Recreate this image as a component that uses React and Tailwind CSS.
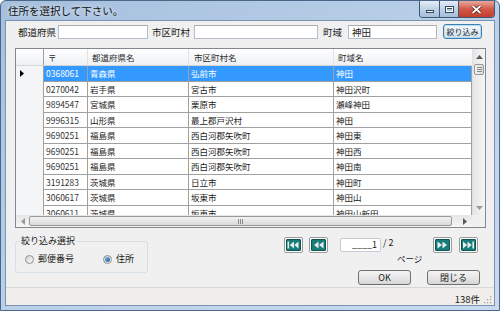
import React from "react";

const rows = [
  ["0368061", "青森県", "弘前市", "神田"],
  ["0270042", "岩手県", "宮古市", "神田沢町"],
  ["9894547", "宮城県", "栗原市", "瀬峰神田"],
  ["9996315", "山形県", "最上郡戸沢村", "神田"],
  ["9690251", "福島県", "西白河郡矢吹町", "神田東"],
  ["9690251", "福島県", "西白河郡矢吹町", "神田西"],
  ["9690251", "福島県", "西白河郡矢吹町", "神田南"],
  ["3191283", "茨城県", "日立市", "神田町"],
  ["3060617", "茨城県", "坂東市", "神田山"],
  ["3060611", "茨城県", "坂東市", "神田山新田"],
];

// small scroll arrow
const Arrow = ({ dir, color = "#5a5a5a" }) => {
  const pts = {
    up: "0,4 3.5,0 7,4",
    down: "0,0 3.5,4 7,0",
    left: "4,0 0,3.5 4,7",
    right: "0,0 4,3.5 0,7",
  }[dir];
  const vertical = dir === "up" || dir === "down";
  return (
    <svg width={vertical ? 7 : 4} height={vertical ? 4 : 7}>
      <polygon points={pts} fill={color} />
    </svg>
  );
};

const NavBtn = ({ kind }) => (
  <div className="w-[19px] h-[16px] rounded-[2px] border border-[#9a9a9a] bg-white p-[1px]">
    <div className="w-full h-full rounded-[1px] border border-[#0c5553] bg-[#187c79] flex items-center justify-center">
      <svg width="13" height="8" viewBox="0 0 13 8">
        {kind === "first" && (
          <>
            <rect x="0.5" y="0.5" width="1.6" height="7" fill="#e6eeee" />
            <polygon points="7,0.5 2.8,4 7,7.5" fill="#e6eeee" />
            <polygon points="11.5,0.5 7.3,4 11.5,7.5" fill="#e6eeee" />
          </>
        )}
        {kind === "prev" && (
          <>
            <polygon points="6.5,0.5 2,4 6.5,7.5" fill="#e6eeee" />
            <polygon points="11.5,0.5 7,4 11.5,7.5" fill="#e6eeee" />
          </>
        )}
        {kind === "next" && (
          <>
            <polygon points="1.5,0.5 6,4 1.5,7.5" fill="#e6eeee" />
            <polygon points="6.5,0.5 11,4 6.5,7.5" fill="#e6eeee" />
          </>
        )}
        {kind === "last" && (
          <>
            <polygon points="1,0.5 5.2,4 1,7.5" fill="#e6eeee" />
            <polygon points="5.5,0.5 9.7,4 5.5,7.5" fill="#e6eeee" />
            <rect x="10.4" y="0.5" width="1.6" height="7" fill="#e6eeee" />
          </>
        )}
      </svg>
    </div>
  </div>
);

const Radio = ({ checked }) => (
  <div className="w-[9px] h-[9px] rounded-full border border-[#8e8f8f] bg-linear-to-br from-[#d4d4d4] to-[#fbfbfb] flex items-center justify-center">
    {checked && (
      <div className="w-[5px] h-[5px] rounded-full bg-linear-to-br from-[#7fb8ea] to-[#1a5aa0]" />
    )}
  </div>
);

const WinButton = ({ children, className = "" }) => (
  <button
    className={
      "h-[15px] rounded-[3px] border border-[#707070] bg-linear-to-b from-[#f4f4f4] via-[#e7e7e7] to-[#d6d6d6] text-[9px] leading-[13px] text-[#1a1a1a] " +
      className
    }
  >
    {children}
  </button>
);

export default function App() {
  return (
    <div className="w-[500px] h-[311px] overflow-hidden bg-white">
      <div className="w-[500px] h-[311px] flex flex-col rounded-t-[6px] border border-[#4a6789] bg-linear-to-br from-[#a5bfdd] via-[#bad0e9] to-[#c8daee] font-['Noto_Sans_CJK_JP',sans-serif] text-[#1a1a1a]">
        {/* title bar */}
        <div className="h-[19px] flex items-start">
          <div className="ml-[7px] text-[10.5px] leading-[19px] text-[#111] [text-shadow:0_0_5px_#ffffff]">
            住所を選択して下さい。
          </div>
          <div className="ml-auto mr-[4px] flex h-[17px] rounded-b-[4px] border border-t-0 border-[#3e5876] overflow-hidden">
            <div className="w-[20px] h-full bg-linear-to-b from-[#e4edf7] via-[#c0d2e6] to-[#a6bdd8] border-r border-[#3e5876] flex items-end justify-center pb-[4px]">
              <div className="w-[8px] h-[3px] bg-white border border-[#34495f]" />
            </div>
            <div className="w-[19px] h-full bg-linear-to-b from-[#e4edf7] via-[#c0d2e6] to-[#a6bdd8] border-r border-[#3e5876] flex items-center justify-center">
              <div className="w-[9px] h-[7px] border border-[#34495f] bg-white p-[1px]">
                <div className="w-full h-full border-t border-[#34495f] bg-[#b9c9dc]" />
              </div>
            </div>
            <div className="w-[35px] h-full bg-linear-to-b from-[#e9a89c] via-[#d2594a] to-[#c23d2c] flex items-center justify-center">
              <svg width="11" height="9" viewBox="0 0 11 9">
                <path d="M1.5 1 L9.5 8 M9.5 1 L1.5 8" stroke="#4a1a14" strokeWidth="3.2" />
                <path d="M1.5 1 L9.5 8 M9.5 1 L1.5 8" stroke="#ffffff" strokeWidth="1.8" />
              </svg>
            </div>
          </div>
        </div>

        {/* client area */}
        <div className="ml-[4px] w-[490px] h-[286px] border border-[#7b93b1] bg-[#f0f0f0] flex flex-col">
          {/* search row */}
          <div className="mt-[3px] h-[15px] flex items-center pl-[12px] text-[9.5px] leading-[12px]">
            <span className="w-[40px]">都道府県</span>
            <div className="w-[90px] h-[14px] bg-white border border-[#b5bdc7] border-t-[#abadb3]" />
            <span className="ml-[4px] w-[42px]">市区町村</span>
            <div className="w-[124px] h-[14px] bg-white border border-[#b5bdc7] border-t-[#abadb3]" />
            <span className="ml-[5px] w-[25px]">町域</span>
            <div className="w-[89px] h-[14px] bg-white border border-[#b5bdc7] border-t-[#abadb3] pl-[3px] leading-[12px]">
              神田
            </div>
            <button className="ml-[6px] w-[39px] h-[15px] rounded-[3px] border border-[#3c7fb1] bg-linear-to-b from-[#f2f8fc] via-[#e3eef7] to-[#cfe2f1] text-[8px] leading-[13px] text-[#1a1a1a] shadow-[inset_0_0_0_1px_#b6dcf5]">
              絞り込み
            </button>
          </div>

          {/* data grid */}
          <div className="ml-[9px] mt-[9px] w-[471px] h-[180px] border border-[#828790] bg-white flex flex-col text-[8.5px]">
            <div className="h-[166px] flex">
              <div className="w-[456px] flex flex-col overflow-hidden">
                {/* header */}
                <div className="h-[17px] shrink-0 flex bg-linear-to-b from-[#ffffff] to-[#eef0f3] border-b border-[#d5d5d5] text-[#2a2a2a] leading-[16px]">
                  <div className="w-[28px] border-r border-[#a0a0a0]" />
                  <div className="w-[44px] pl-[4px] border-r border-[#e2e2e2]">〒</div>
                  <div className="w-[101px] pl-[4px] border-r border-[#e2e2e2]">都道府県名</div>
                  <div className="w-[145px] pl-[5px] border-r border-[#e2e2e2]">市区町村名</div>
                  <div className="w-[138px] pl-[4px]">町域名</div>
                </div>
                {rows.map((r, i) => {
                  const sel = i === 0;
                  const cell =
                    "border-r border-b border-[#a0a0a0] pl-[2px] whitespace-nowrap overflow-hidden " +
                    (sel ? "bg-[#3399ff] text-white" : "bg-white text-[#1a1a1a]");
                  return (
                    <div key={i} className="h-[15.5px] shrink-0 flex leading-[14.5px]">
                      <div className="w-[28px] bg-[#f4f5f7] border-r border-[#a0a0a0] flex items-center pl-[4px]">
                        {sel && (
                          <svg width="4" height="7">
                            <polygon points="0,0 4,3.5 0,7" fill="#000" />
                          </svg>
                        )}
                      </div>
                      <div className={"w-[44px] " + cell + (sel ? "" : " text-[#333]")}>{r[0]}</div>
                      <div className={"w-[101px] " + cell}>{r[1]}</div>
                      <div className={"w-[145px] " + cell}>{r[2]}</div>
                      <div className={"w-[138px] " + cell}>{r[3]}</div>
                    </div>
                  );
                })}
              </div>
              {/* vertical scrollbar */}
              <div className="w-[13px] flex flex-col bg-linear-to-r from-[#e6e6e6] to-[#f5f5f5] border-l border-[#e0e0e0]">
                <div className="h-[15px] flex items-center justify-center">
                  <Arrow dir="up" />
                </div>
                <div className="h-[11px] mx-[1px] rounded-[2px] border border-[#979797] bg-linear-to-r from-[#f3f3f3] to-[#dcdcdc] flex flex-col items-center justify-center gap-[1px]">
                  <div className="w-[5px] h-[1px] bg-[#8a8a8a]" />
                  <div className="w-[5px] h-[1px] bg-[#8a8a8a]" />
                  <div className="w-[5px] h-[1px] bg-[#8a8a8a]" />
                </div>
                <div className="flex-1" />
                <div className="h-[15px] flex items-center justify-center">
                  <Arrow dir="down" color="#9a9a9a" />
                </div>
              </div>
            </div>
            {/* horizontal scrollbar */}
            <div className="h-[12px] flex">
              <div className="w-[456px] flex bg-linear-to-b from-[#e6e6e6] to-[#f5f5f5]">
                <div className="w-[13px] flex items-center justify-center">
                  <Arrow dir="left" color="#9a9a9a" />
                </div>
                <div className="w-[423px] my-[1px] rounded-[2px] border border-[#979797] bg-linear-to-b from-[#f3f3f3] to-[#d9d9d9] flex items-center justify-center gap-[1px]">
                  <div className="w-[1px] h-[5px] bg-[#8a8a8a]" />
                  <div className="w-[1px] h-[5px] bg-[#8a8a8a]" />
                  <div className="w-[1px] h-[5px] bg-[#8a8a8a]" />
                </div>
                <div className="flex-1" />
                <div className="w-[14px] flex items-center justify-center">
                  <Arrow dir="right" />
                </div>
              </div>
              <div className="w-[13px] bg-[#f0f0f0]" />
            </div>
          </div>

          {/* bottom controls */}
          <div className="h-[59px] flex">
            <fieldset className="ml-[9px] mt-[7px] w-[133px] h-[38px] rounded-[3px] border border-[#d5dfe5] px-[9px]">
              <legend className="ml-[-5px] px-[1px] text-[9px] leading-[12px]">絞り込み選択</legend>
              <div className="mt-[6px] flex items-center text-[9px] leading-[12px]">
                <Radio />
                <span className="ml-[4px]">郵便番号</span>
                <div className="ml-[29px]">
                  <Radio checked />
                </div>
                <span className="ml-[4px]">住所</span>
              </div>
            </fieldset>

            <div className="ml-auto mr-[12px] w-[198px] flex flex-col">
              <div className="mt-[9px] h-[16px] flex items-start">
                <NavBtn kind="first" />
                <div className="ml-[6px]">
                  <NavBtn kind="prev" />
                </div>
                <div className="ml-[12px] mt-[1px] w-[41px] h-[14px] rounded-[2px] bg-white border border-[#c6cdd4] text-right pr-[3px] text-[9px] leading-[12px]">
                  ____1
                </div>
                <div className="ml-[2px] w-[50px] h-[16px] flex flex-col text-[9px] leading-[10px]">
                  <span className="mt-[1px]">/ 2</span>
                  <span className="ml-[14px] mt-[5px] text-[8.5px]">ページ</span>
                </div>
                <NavBtn kind="next" />
                <div className="ml-[7px]">
                  <NavBtn kind="last" />
                </div>
              </div>
              <div className="mt-[17px] flex">
                <WinButton className="ml-[74px] w-[53px]">OK</WinButton>
                <WinButton className="ml-[16px] w-[53px]">閉じる</WinButton>
              </div>
            </div>
          </div>

          {/* status bar */}
          <div className="h-[18px] border-t border-[#d7d7d7] bg-[#f1edeb] flex items-center justify-end pr-[2px]">
            <span className="text-[9.5px] leading-[12px] mt-[4px]">138件</span>
            <svg width="9" height="9" className="ml-[3px] mt-[6px]">
              <rect x="7" y="1" width="1.2" height="1.2" fill="#a0a0a0" />
              <rect x="4" y="4" width="1.2" height="1.2" fill="#a0a0a0" />
              <rect x="7" y="4" width="1.2" height="1.2" fill="#a0a0a0" />
              <rect x="1" y="7" width="1.2" height="1.2" fill="#a0a0a0" />
              <rect x="4" y="7" width="1.2" height="1.2" fill="#a0a0a0" />
              <rect x="7" y="7" width="1.2" height="1.2" fill="#a0a0a0" />
            </svg>
          </div>
        </div>
      </div>
    </div>
  );
}
